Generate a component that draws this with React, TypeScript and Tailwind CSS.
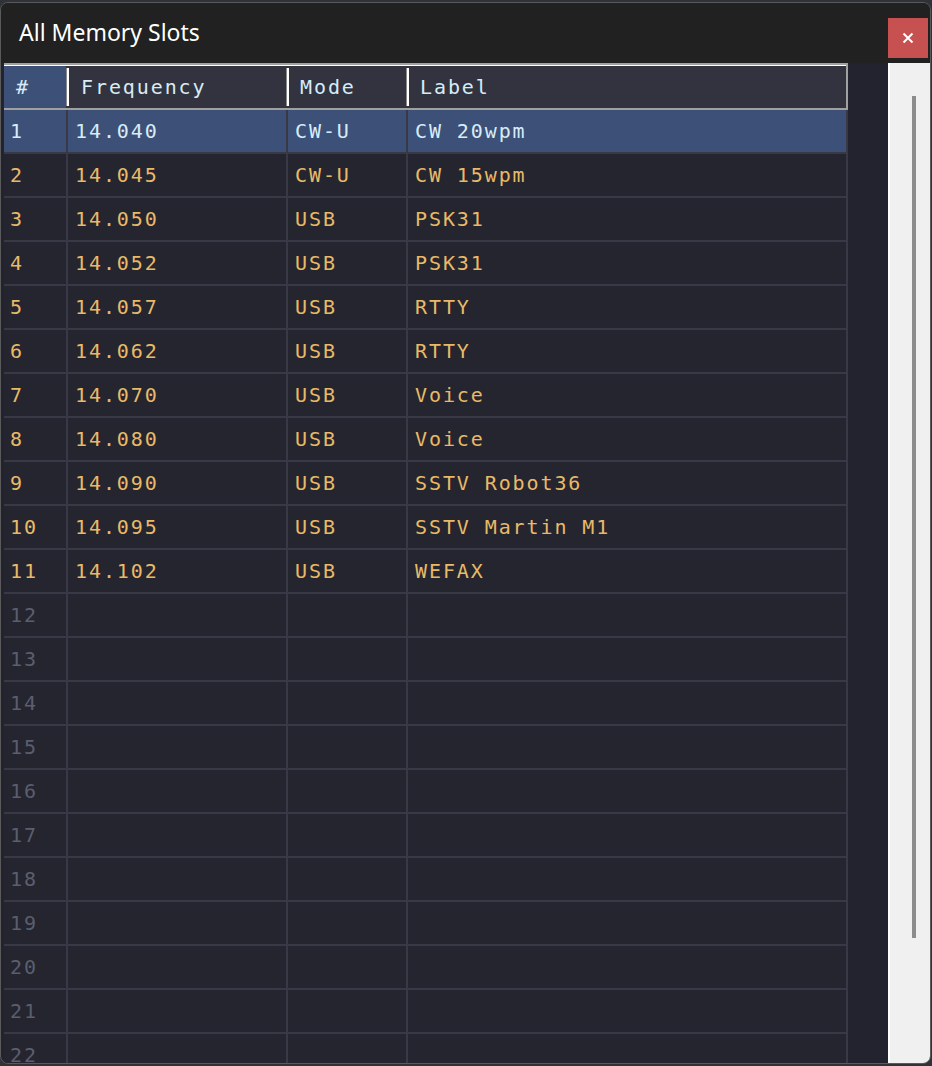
import React from "react";

const rows: { n: number; f?: string; m?: string; l?: string }[] = [
  { n: 1, f: "14.040", m: "CW-U", l: "CW 20wpm" },
  { n: 2, f: "14.045", m: "CW-U", l: "CW 15wpm" },
  { n: 3, f: "14.050", m: "USB", l: "PSK31" },
  { n: 4, f: "14.052", m: "USB", l: "PSK31" },
  { n: 5, f: "14.057", m: "USB", l: "RTTY" },
  { n: 6, f: "14.062", m: "USB", l: "RTTY" },
  { n: 7, f: "14.070", m: "USB", l: "Voice" },
  { n: 8, f: "14.080", m: "USB", l: "Voice" },
  { n: 9, f: "14.090", m: "USB", l: "SSTV Robot36" },
  { n: 10, f: "14.095", m: "USB", l: "SSTV Martin M1" },
  { n: 11, f: "14.102", m: "USB", l: "WEFAX" },
  ...Array.from({ length: 11 }, (_, i) => ({ n: 12 + i })),
];

const mono = "font-['DejaVu_Sans_Mono',monospace] text-[20px] tracking-[1.9px] leading-none";

export default function App() {
  return (
    <div className="w-[932px] h-[1066px] bg-[#2f3338] overflow-hidden pt-[2px]">
      <div className="w-[931px] h-[1062px] rounded-t-[8px] rounded-b-[8px] border border-[#5a5a5a] bg-[#22232e] flex flex-col overflow-hidden">
        <div className="h-[60px] bg-[#202120] flex items-start justify-between shrink-0">
          <div className="pl-[18px] pt-[14px] text-white text-[23px] font-['Noto_Sans',sans-serif] leading-[30px]">
            All Memory Slots
          </div>
          <div className="mt-[15px] mr-[2px] w-[40px] h-[40px] bg-[#c75050] flex items-center justify-center">
            <svg width="12" height="12" viewBox="0 0 12 12">
              <path d="M1.5 1.5 L10.5 10.5 M10.5 1.5 L1.5 10.5" stroke="white" strokeWidth="2" />
            </svg>
          </div>
        </div>
        <div className="flex flex-1 min-h-0">
          <div className="w-[887px] pl-[3px] overflow-hidden">
            <div className="w-[844px]">
              <div className="h-[47px] border-t-2 border-[#a0a0a0] border-r-2 border-b-2 bg-[#33333f] flex">
                <div className="w-full flex border-t border-white">
                  <div className={`w-[62px] bg-[#3c5078] text-[#d6ecf8] pl-[12px] flex items-center ${mono}`}>#</div>
                  <div className="w-[3px] flex py-[2px]"><div className="w-[1px] bg-[#8a8a8a]" /><div className="w-[2px] bg-white" /></div>
                  <div className={`w-[217px] text-[#d6ecf8] pl-[12px] flex items-center ${mono}`}>Frequency</div>
                  <div className="w-[3px] flex py-[2px]"><div className="w-[1px] bg-[#8a8a8a]" /><div className="w-[2px] bg-white" /></div>
                  <div className={`w-[117px] text-[#d6ecf8] pl-[11px] flex items-center ${mono}`}>Mode</div>
                  <div className="w-[3px] flex py-[2px]"><div className="w-[1px] bg-[#8a8a8a]" /><div className="w-[2px] bg-white" /></div>
                  <div className={`flex-1 text-[#d6ecf8] pl-[11px] flex items-center ${mono}`}>Label</div>
                </div>
              </div>
              {rows.map((r) => {
                const sel = r.n === 1;
                const empty = !r.f;
                const txt = sel ? "text-[#d6ecf8]" : empty ? "text-[#5a5e6e]" : "text-[#e8ba68]";
                return (
                  <div
                    key={r.n}
                    className={`h-[44px] flex border-b-2 border-r-2 border-[#393846] ${sel ? "bg-[#3c5078]" : "bg-[#25252f]"}`}
                  >
                    <div className={`w-[64px] border-r-2 border-[#393846] pl-[6px] flex items-center ${mono} ${txt}`}>{r.n}</div>
                    <div className={`w-[220px] border-r-2 border-[#393846] pl-[7px] flex items-center ${mono} ${txt}`}>{r.f}</div>
                    <div className={`w-[120px] border-r-2 border-[#393846] pl-[7px] flex items-center ${mono} ${txt}`}>{r.m}</div>
                    <div className={`flex-1 pl-[7px] flex items-center ${mono} ${txt}`}>{r.l}</div>
                  </div>
                );
              })}
            </div>
          </div>
          <div className="flex-1 bg-[#f0f0f0] border-l-2 border-white pl-[22px] pt-[33px]">
            <div className="w-[4px] h-[842px] bg-[#8c8c8c]" />
          </div>
        </div>
      </div>
    </div>
  );
}
